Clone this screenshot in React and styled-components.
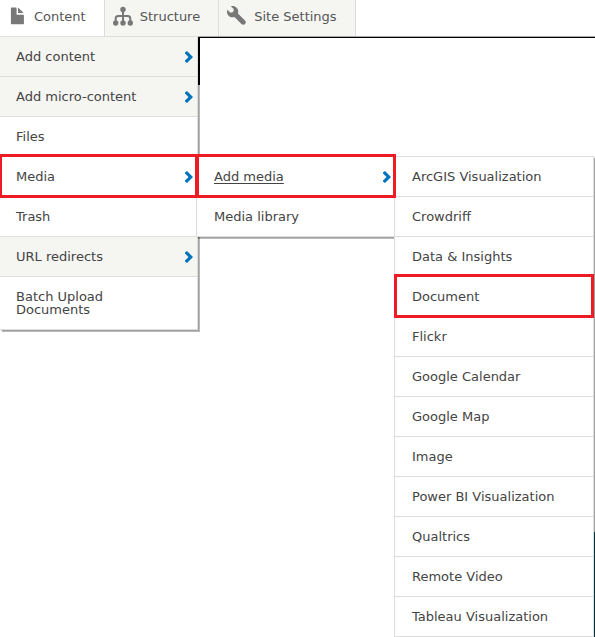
import React from 'react';
import styled, { createGlobalStyle, css } from 'styled-components';

const GlobalStyle = createGlobalStyle`
  * {
    box-sizing: border-box;
  }

  body {
    margin: 0;
    background-color: white;
    font-family: Verdana, "DejaVu Sans", sans-serif;
    font-size: 13px;
    line-height: 13px;
    color: #444;
  }
`;

const Page = styled.div`
  display: flex;
  flex-direction: column;
  min-height: 100vh;
  overflow: hidden;
`;

const Toolbar = styled.nav`
  position: relative;
  border-bottom: 1px solid #aaa;
`;

const TabList = styled.div`
  display: flex;
`;

const Tab = styled.a`
  display: flex;
  align-items: center;
  gap: 7px;
  height: 36px;
  padding: 0 18px 4px 8px;
  border-right: 1px solid #ddd;
  background-color: ${({ $active }) => ($active ? 'white' : '#f5f5f2')};
  color: #565656;
  text-decoration: none;
  white-space: nowrap;

  &:first-child {
    padding-left: 7px;
  }
`;

const TabIcon = styled.svg`
  width: 20px;
  height: 20px;
  fill: #787878;
`;

const Menu = styled.ul`
  position: absolute;
  z-index: 1;
  top: 100%;
  left: 0;
  width: 198px;
  margin: 0;
  padding: 0;
  list-style: none;
  background-color: white;
  border: 1px solid #ddd;
  border-width: 1px 1px 0 0;
  box-shadow: 1px 1px 0 rgba(0, 0, 0, 0.12), 2px 2px 0 rgba(0, 0, 0, 0.28);
`;

const MainMenu = styled(Menu)`
  top: 36px;
`;

const SubMenu = styled(Menu)`
  top: -1px;
  left: calc(100% - 1px);
  width: 200px;
  border-left-width: 1px;
`;

const highlight = css`
  &::after {
    content: '';
    position: absolute;
    z-index: 2;
    inset: -3px -1px -2px;
    border: 3px solid #ed1c24;
    pointer-events: none;
  }
`;

const MenuItem = styled.li`
  position: relative;
  border-bottom: 1px solid #ddd;
  background-color: ${({ $shaded }) => ($shaded ? '#f5f5f2' : 'white')};
  ${({ $highlighted }) => $highlighted && highlight}
`;

const MenuLink = styled.a`
  display: flex;
  align-items: center;
  justify-content: space-between;
  padding: 13px 4px 13px ${({ $nested }) => ($nested ? '17px' : '16px')};
  color: inherit;
  text-decoration: ${({ $active }) => ($active ? 'underline' : 'none')};
  text-underline-offset: 2px;
`;

const Label = styled.span`
  max-width: 150px;
`;

const Chevron = styled.svg`
  flex: none;
  width: 8px;
  height: 12px;
  fill: #0074bd;
`;

const Content = styled.main`
  display: flex;
  flex: 1;
  flex-direction: column;
  justify-content: space-between;
  border-top: 1px solid black;
`;

const Masthead = styled.div`
  width: 200px;
  height: 47px;
  background-color: black;
`;

const FooterPanel = styled.div`
  align-self: flex-end;
  width: 200px;
  height: 105px;
  background-color: #005566;
`;

const FileIcon = () => (
  <TabIcon viewBox="0 0 20 20" aria-hidden="true">
    <path d="M4.500 1.500H9a.6.6 0 0 1 .6.600V8.200a.6.6 0 0 0 .6.600h6.100a.6.6 0 0 1 .6.600v8.200a.6.6 0 0 1-.6.600H4.500a.6.6 0 0 1-.6-.6V2.100a.6.6 0 0 1 .6-.6z" />
    <path d="M11 2.200c0-.5.300-.6.600-.3l4.600 4.600c.3.300.2.600-.3.600H11z" />
  </TabIcon>
);

const StructureIcon = () => (
  <TabIcon viewBox="0 0 20 20" aria-hidden="true">
    <path
      d="M10 3v14M2.700 16v-3.500q0-2.500 2.500-2.500h9.600q2.500 0 2.500 2.500V16"
      fill="none"
      stroke="#787878"
      strokeWidth="2"
    />
    <circle cx="10" cy="3.500" r="2.700" />
    <circle cx="2.700" cy="17" r="2.700" />
    <circle cx="10" cy="17" r="2.700" />
    <circle cx="17.300" cy="17" r="2.700" />
  </TabIcon>
);

const WrenchIcon = () => (
  <TabIcon viewBox="0 0 16 16" aria-hidden="true">
    <path d="M14.416 11.586l-.01-.009-5.656-5.656c.15-.449.252-.921.252-1.421 0-2.485-2.016-4.5-4.502-4.5-.505 0-.981.102-1.434.255l2.431 2.431-.588 2.196-2.196.588-2.445-2.445c-.162.464-.268.956-.268 1.475 0 2.486 2.014 4.5 4.5 4.5.5 0 .972-.102 1.421-.251l5.667 5.665c.781.781 2.047.781 2.828 0s.781-2.047 0-2.828z" />
  </TabIcon>
);

const tabs = [
  { label: 'Content', icon: FileIcon, active: true },
  { label: 'Structure', icon: StructureIcon },
  { label: 'Site Settings', icon: WrenchIcon },
];

const mediaTypes = [
  { label: 'ArcGIS Visualization' },
  { label: 'Crowdriff' },
  { label: 'Data & Insights' },
  { label: 'Document', highlighted: true },
  { label: 'Flickr' },
  { label: 'Google Calendar' },
  { label: 'Google Map' },
  { label: 'Image' },
  { label: 'Power BI Visualization' },
  { label: 'Qualtrics' },
  { label: 'Remote Video' },
  { label: 'Tableau Visualization' },
];

const mediaMenu = [
  {
    label: 'Add media',
    expandable: true,
    highlighted: true,
    active: true,
    children: mediaTypes,
  },
  { label: 'Media library' },
];

const contentMenu = [
  { label: 'Add content', expandable: true, shaded: true },
  { label: 'Add micro-content', expandable: true, shaded: true },
  { label: 'Files' },
  { label: 'Media', expandable: true, highlighted: true, children: mediaMenu },
  { label: 'Trash' },
  { label: 'URL redirects', expandable: true, shaded: true },
  { label: 'Batch Upload Documents' },
];

const MenuItems = ({ items, nested }) =>
  items.map((item) => (
    <MenuItem
      key={item.label}
      $shaded={item.shaded}
      $highlighted={item.highlighted}
    >
      <MenuLink href="#" $nested={nested} $active={item.active}>
        <Label>{item.label}</Label>
        {item.expandable && (
          <Chevron viewBox="0 0 8 12" aria-hidden="true">
            <path d="M2 0l6 6-6 6-2-1.500v-1L3.500 6 0 2.500v-1z" />
          </Chevron>
        )}
      </MenuLink>
      {item.children && (
        <SubMenu>
          <MenuItems items={item.children} nested />
        </SubMenu>
      )}
    </MenuItem>
  ));

const App = () => {
  return (
    <Page>
      <GlobalStyle />
      <Toolbar>
        <TabList>
          {tabs.map(({ label, icon: Icon, active }) => (
            <Tab key={label} href="#" $active={active}>
              <Icon />
              {label}
            </Tab>
          ))}
        </TabList>
        <MainMenu>
          <MenuItems items={contentMenu} />
        </MainMenu>
      </Toolbar>
      <Content>
        <Masthead />
        <FooterPanel />
      </Content>
    </Page>
  );
};

export default App;
